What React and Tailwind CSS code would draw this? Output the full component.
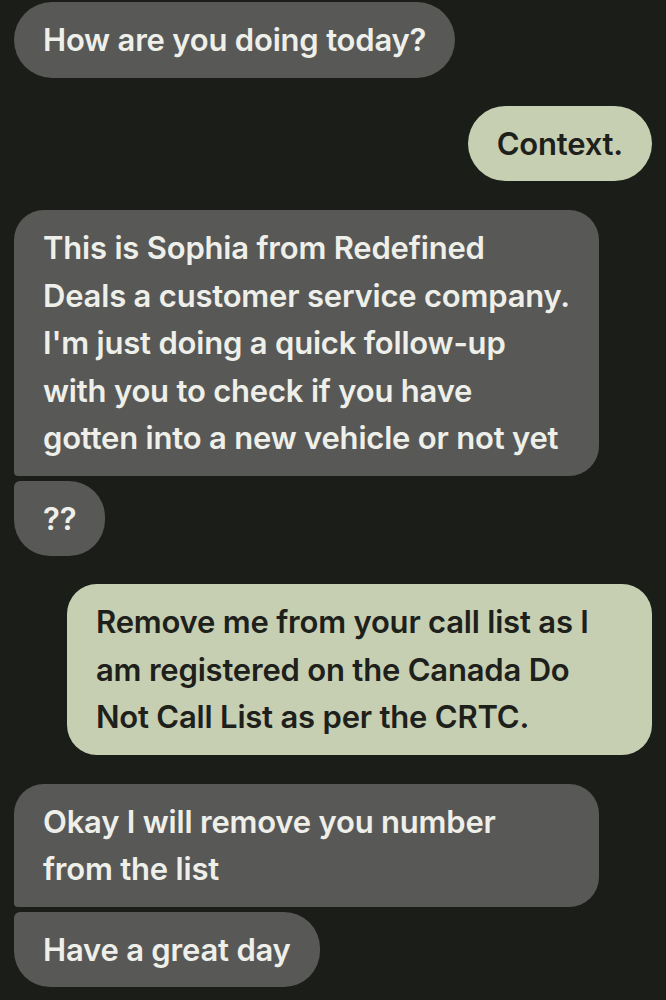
const messages = [
  { from: 'them', lines: ['How are you doing today?'], corners: 'rounded-[38px]', gap: 'mt-[2px]' },
  { from: 'me', lines: ['Context.'], corners: 'rounded-[38px]', gap: 'mt-[28px]' },
  {
    from: 'them',
    lines: [
      'This is Sophia from Redefined',
      'Deals a customer service company.',
      "I'm just doing a quick follow-up",
      'with you to check if you have',
      'gotten into a new vehicle or not yet',
    ],
    corners: 'rounded-[30px] rounded-bl-[4px]',
    gap: 'mt-[29px]',
  },
  { from: 'them', lines: ['??'], corners: 'rounded-[36px] rounded-tl-[6px]', gap: 'mt-[5px]' },
  {
    from: 'me',
    lines: ['Remove me from your call list as I', 'am registered on the Canada Do', 'Not Call List as per the CRTC.'],
    corners: 'rounded-[30px]',
    gap: 'mt-[28px]',
  },
  {
    from: 'them',
    lines: ['Okay I will remove you number', 'from the list'],
    corners: 'rounded-[30px] rounded-bl-[4px]',
    gap: 'mt-[29px]',
  },
  { from: 'them', lines: ['Have a great day'], corners: 'rounded-[36px] rounded-tl-[6px]', gap: 'mt-[5px]' },
]

export default function App() {
  return (
    <div className="w-[666px] h-[1000px] overflow-hidden bg-[#1b1d18] px-[14px] flex flex-col font-['Inter',sans-serif]">
      {messages.map((m, i) => (
        <div key={i} className={`flex ${m.from === 'me' ? 'justify-end' : 'justify-start'} ${m.gap}`}>
          <div
            className={`${m.lines.length > 1 ? 'w-[585px]' : ''} px-[29px] py-[14px] text-[31px] leading-[47.5px] font-semibold tracking-[-0.2px] whitespace-nowrap ${m.corners} ${
              m.from === 'me' ? 'bg-[#c6cfb1] text-[#1e201b]' : 'bg-[#585957] text-[#efefea]'
            }`}
          >
            {m.lines.map((l, j) => (
              <div key={j}>{l}</div>
            ))}
          </div>
        </div>
      ))}
    </div>
  )
}
